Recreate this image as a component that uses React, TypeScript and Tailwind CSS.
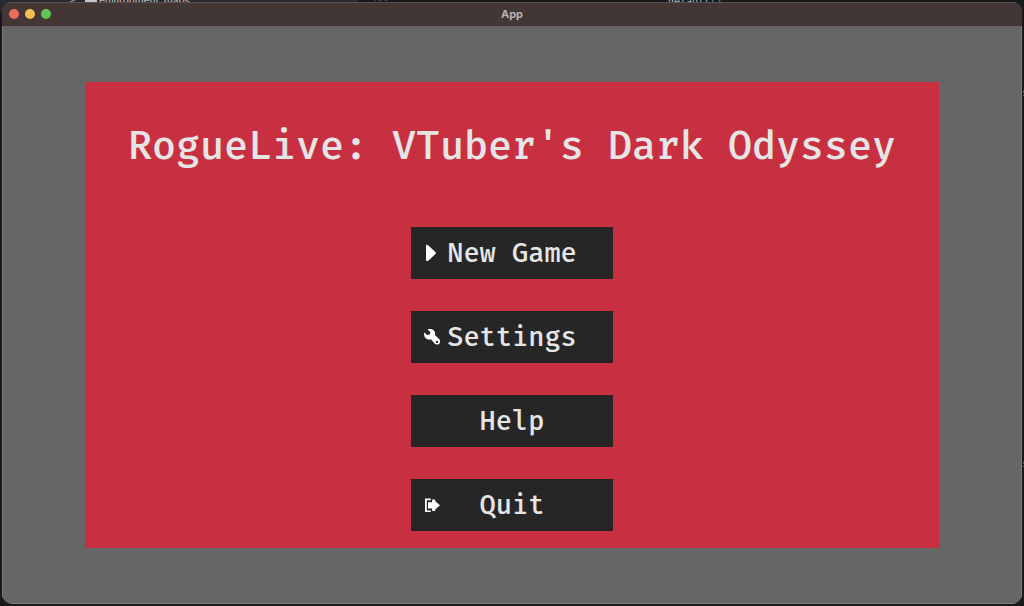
import type { ReactNode } from "react";

interface MenuButtonProps {
  label: string;
  icon?: ReactNode;
}

const PlayIcon = () => (
  <svg className="w-4 h-[18px]" viewBox="0 0 16 18" fill="white" aria-hidden="true">
    <path d="M2 1.6Q2 .7 3 .7 3.8.7 4.4 1.4L11.6 8.2Q12.4 9 11.6 9.8L4.6 16.4Q3.8 17 3 17 2 17 2 16.2Z" />
  </svg>
);

const WrenchIcon = () => (
  <svg className="w-4 h-4" viewBox="0 0 16 16" fill="white" aria-hidden="true">
    <path
      fillRule="evenodd"
      d="M3.6.5C6-.4 8.8.1 10.2 2 11.2 3.4 11.3 4.7 10.9 6.1L15.3 10.2C16.4 11.3 16.4 13.5 15.2 14.7 14 15.9 12 15.9 10.9 14.8L6.9 10.3C5.3 10.9 3.5 10.7 2.1 9.6.4 8.3-.3 5.8.2 3.5L3.1 6.1 5.7 5.5 6.3 2.9ZM13 11.7A1.2 1.2 0 1 0 13 14.1 1.2 1.2 0 1 0 13 11.7Z"
    />
  </svg>
);

const ExitIcon = () => (
  <svg className="w-4 h-4" viewBox="0 0 16 16" fill="white" aria-hidden="true">
    <path d="M1 1.5H6.8V3.2H2.8V13.4H6.8V15H1Z" />
    <path d="M4 5.2H8V3.4Q8 2.6 9 2.6H11.2V4.2L16 8.3 11.2 12.4V14H9Q8 14 8 13.2V11.4H4Z" />
  </svg>
);

const MenuButton = ({ label, icon }: MenuButtonProps) => {
  return (
    <button
      type="button"
      className="grid grid-cols-[16px_1fr_16px] items-center w-[202px] h-[52px] px-[13px] bg-[#262626] text-[#e5e5e5] text-[27px] leading-8 font-medium hover:bg-[#404040]"
    >
      <span className="flex items-center justify-center">{icon}</span>
      <span className="whitespace-nowrap text-center">{label}</span>
    </button>
  );
};

const TitleBar = () => {
  return (
    <header className="grid grid-cols-[1fr_auto_1fr] items-center h-6 px-[7px] pb-0.5 bg-[#423734] border-t border-[#5c5350]">
      <div className="flex gap-1.5">
        <button type="button" aria-label="Close" className="size-2.5 rounded-full bg-[#ed6a5e]" />
        <button type="button" aria-label="Minimize" className="size-2.5 rounded-full bg-[#f4be50]" />
        <button type="button" aria-label="Zoom" className="size-2.5 rounded-full bg-[#61c455]" />
      </div>
      <span className="font-['Inter',sans-serif] text-[11px] leading-4 font-bold text-[#bbb2af]">App</span>
    </header>
  );
};

/* Editor that peeks out around the window */
const EditorBackdrop = () => {
  return (
    <div
      aria-hidden="true"
      className="absolute inset-0 overflow-hidden font-['DejaVu_Sans_Mono',monospace] text-[10px] leading-3 text-[#b8b8b8]"
    >
      <div className="absolute left-0 top-0 h-3 w-[358px] bg-[#292a2e]" />
      <span className="absolute left-[70px] -top-1.5">&gt;</span>
      <span className="absolute left-[85px] top-0 w-3 h-2 bg-[#c5c7ca]" />
      <span className="absolute left-[99px] -top-1.5 font-['Inter',sans-serif] font-medium">environment_maps</span>
      <span className="absolute left-[371px] -top-2 text-[#55585c]">400</span>
      <span className="absolute left-[668px] -top-1">
        default<span className="text-[#3fa796]">()</span>
      </span>
      <span className="absolute -right-1 top-[87px] text-[#5d8a5d]">s</span>
      <span className="absolute -right-1 top-[458px] text-[#5d8a5d]">s</span>
    </div>
  );
};

const App = () => {
  return (
    <div className="relative flex min-h-screen bg-[#19191b] p-0.5">
      <EditorBackdrop />

      <div className="relative flex flex-col flex-1 min-w-0 overflow-hidden rounded-[10px] bg-[#666666]">
        <TitleBar />

        <main className="flex flex-1 items-center justify-center border-x border-b border-[#7c7c7c] font-['Fira_Mono','DejaVu_Sans_Mono',monospace]">
          <div className="flex flex-col items-center px-[43px] pt-10 pb-[17px] bg-[#c83042]">
            <h1 className="mb-[57px] text-[40px] leading-[48px] font-medium text-center text-[#e5e5e5]">
              RogueLive: VTuber's Dark Odyssey
            </h1>

            <nav className="flex flex-col gap-8">
              <MenuButton label="New Game" icon={<PlayIcon />} />
              <MenuButton label="Settings" icon={<WrenchIcon />} />
              <MenuButton label="Help" />
              <MenuButton label="Quit" icon={<ExitIcon />} />
            </nav>
          </div>
        </main>
      </div>
    </div>
  );
};

export default App;
